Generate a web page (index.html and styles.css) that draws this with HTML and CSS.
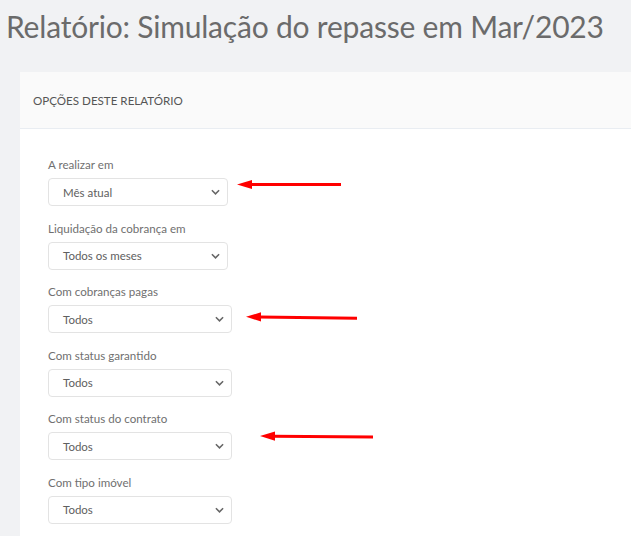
FILE: index.html
```html
<!DOCTYPE html>
<html lang="pt-BR">
<head>
<meta charset="utf-8">
<title>Relatório</title>
<link rel="stylesheet" href="styles.css">
</head>
<body>
<div class="page">
  <h1 class="title">Relatório: Simulação do repasse em Mar/2023</h1>
  <section class="card">
    <header class="card-header">OPÇÕES DESTE RELATÓRIO</header>
    <div class="card-body">
      <div class="field">
        <label class="label">A realizar em</label>
        <div class="select narrow"><span>Mês atual</span><svg class="chev" viewBox="0 0 10 6" width="9" height="6"><path d="M1 1l4 4 4-4" fill="none" stroke="#666" stroke-width="1.7"/></svg></div>
      </div>
      <div class="field">
        <label class="label">Liquidação da cobrança em</label>
        <div class="select narrow"><span>Todos os meses</span><svg class="chev" viewBox="0 0 10 6" width="9" height="6"><path d="M1 1l4 4 4-4" fill="none" stroke="#666" stroke-width="1.7"/></svg></div>
      </div>
      <div class="field">
        <label class="label">Com cobranças pagas</label>
        <div class="select"><span>Todos</span><svg class="chev" viewBox="0 0 10 6" width="9" height="6"><path d="M1 1l4 4 4-4" fill="none" stroke="#666" stroke-width="1.7"/></svg></div>
      </div>
      <div class="field">
        <label class="label">Com status garantido</label>
        <div class="select"><span>Todos</span><svg class="chev" viewBox="0 0 10 6" width="9" height="6"><path d="M1 1l4 4 4-4" fill="none" stroke="#666" stroke-width="1.7"/></svg></div>
      </div>
      <div class="field">
        <label class="label">Com status do contrato</label>
        <div class="select"><span>Todos</span><svg class="chev" viewBox="0 0 10 6" width="9" height="6"><path d="M1 1l4 4 4-4" fill="none" stroke="#666" stroke-width="1.7"/></svg></div>
      </div>
      <div class="field">
        <label class="label">Com tipo imóvel</label>
        <div class="select"><span>Todos</span><svg class="chev" viewBox="0 0 10 6" width="9" height="6"><path d="M1 1l4 4 4-4" fill="none" stroke="#666" stroke-width="1.7"/></svg></div>
      </div>
    </div>
  </section>
  <svg class="annotations" viewBox="0 0 631 536" width="631" height="536">
    <g fill="#ff0000" stroke="#ff0000">
      <line x1="250" y1="184.5" x2="341" y2="184.5" stroke-width="3"/>
      <polygon points="237,184.5 252,180 252,189" stroke="none"/>
      <line x1="259" y1="317" x2="357" y2="318.2" stroke-width="3"/>
      <polygon points="246,316.8 261,312.3 261,321.5" stroke="none"/>
      <line x1="273" y1="436.2" x2="373" y2="437" stroke-width="3"/>
      <polygon points="260,436 275,431.5 275,440.7" stroke="none"/>
    </g>
  </svg>
</div>
</body>
</html>
```
FILE: styles.css
```css
* { box-sizing: border-box; }
html, body { margin: 0; padding: 0; }
body {
  background: #f1f2f4;
  font-family: Lato, "Open Sans", sans-serif;
  color: #666;
  overflow: hidden;
}
.page {
  position: relative;
  width: 631px;
  height: 536px;
  overflow: hidden;
}
.title {
  margin: 0;
  padding: 8px 0 0 6px;
  height: 72px;
  font-size: 30px;
  font-weight: 400;
  line-height: 36px;
  color: #6b6b6b;
  letter-spacing: -0.2px;
  white-space: nowrap;
}
.card {
  margin-left: 20px;
  background: #fff;
}
.card-header {
  height: 57px;
  padding: 0 13px;
  display: flex;
  align-items: center;
  background: #fafafa;
  border-bottom: 1px solid #e9edf2;
  font-size: 11.6px;
  color: #555;
}
.card-body {
  padding: 28px 28px 20px;
  display: flex;
  flex-direction: column;
  gap: 14.6px;
}
.field {
  display: flex;
  flex-direction: column;
  gap: 5px;
}
.label {
  font-size: 11.6px;
  line-height: 16px;
  color: #707070;
}
.select {
  width: 184px;
  height: 28px;
  border: 1px solid #e3e3e3;
  border-radius: 4px;
  background: #fff;
  display: flex;
  align-items: center;
  justify-content: space-between;
  padding: 0 7px 0 14px;
  font-size: 11.5px;
  color: #606060;
}
.select.narrow { width: 180px; }
.chev { display: block; }
.annotations {
  position: absolute;
  left: 0;
  top: 0;
  pointer-events: none;
}
```
